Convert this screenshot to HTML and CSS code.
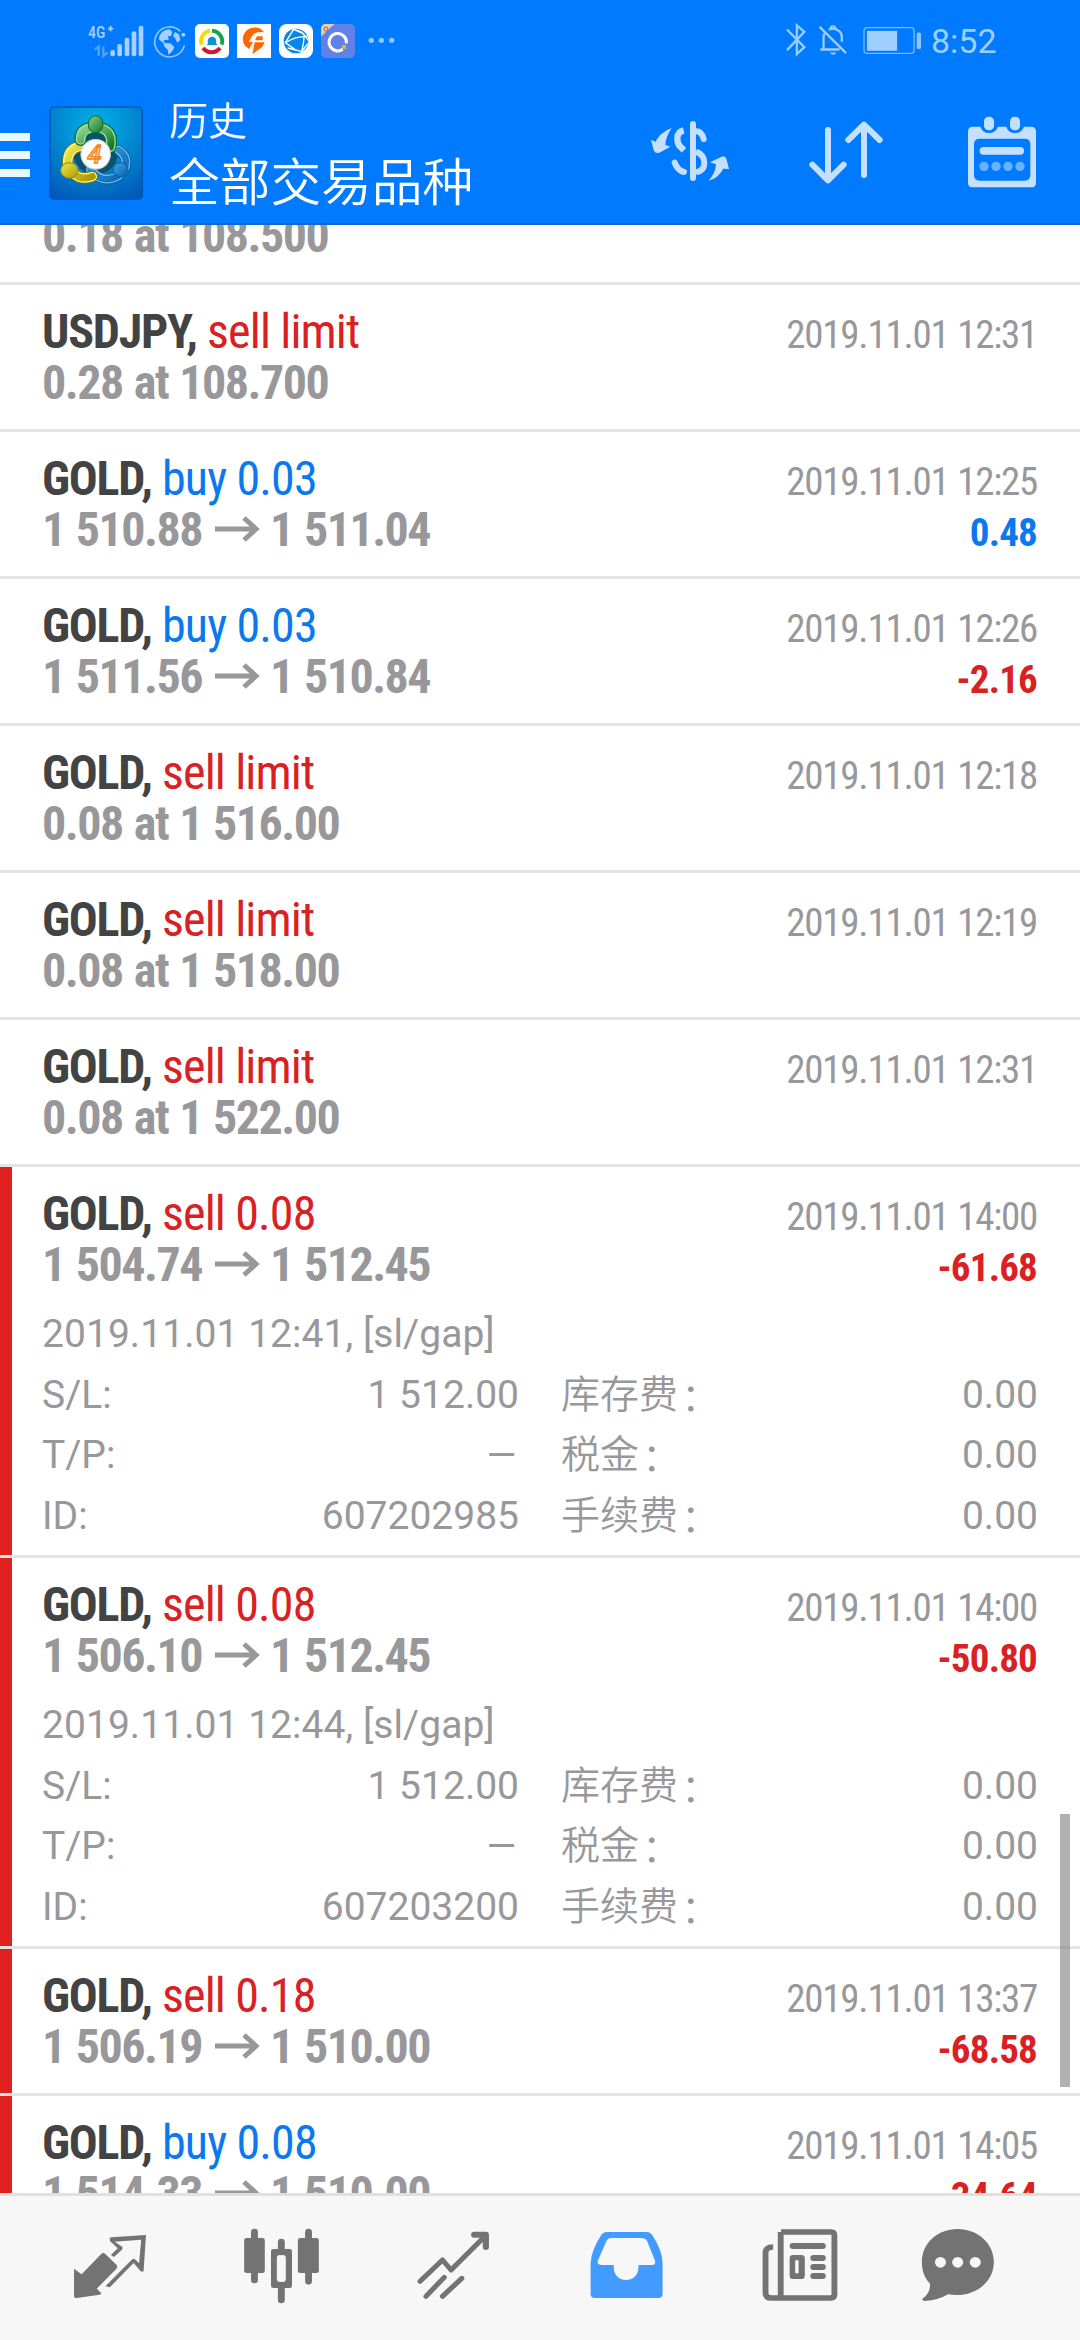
FILE: index.html
```html
<!DOCTYPE html>
<html lang="zh-CN">
<head>
<meta charset="utf-8">
<title>历史</title>
<link rel="stylesheet" href="styles.css">
</head>
<body>
<div class="screen">
  <div class="status">
    <div class="status-left">
      <svg class="signal" viewBox="84 66 168 108"><text x="84" y="111" font-size="47" textLength="52" lengthAdjust="spacingAndGlyphs">4G</text><path d="M144 83h16M152 75v16" stroke="#a6d0ff" stroke-width="5"/><g fill="#a6d0ff"><rect x="151" y="147" width="14" height="19" rx="6"/><rect x="172" y="129" width="14" height="37" rx="6"/><rect x="194" y="110" width="14" height="56" rx="6"/><rect x="215" y="91" width="14" height="75" rx="6"/><rect x="236" y="74" width="14" height="92" rx="6"/></g><path d="M104 146l12-9v28M130 137v28l13-11" fill="none" stroke="#4fa3ff" stroke-width="7"/></svg>
      <svg class="globe" viewBox="280 72 102 102"><path d="M362 94A45 45 0 1 0 374 136" fill="none" stroke="#8fc4ff" stroke-width="5"/><circle cx="371" cy="104" r="6" fill="#a6d0ff"/><path d="M299 108q10-19 31-20l8 8-4 12-9 1 2 10-15 2 3 8 17 1 12 11-4 10-13 14-3-16-9-8-4-13-13-9zM346 96l12 7 4 17-9 8-7-14-6-7z" fill="#a6d0ff"/></svg>
      <svg class="app" viewBox="0 0 102 102"><rect width="102" height="102" rx="15" fill="#fff"/><g fill="none" stroke-width="12"><path d="M20 62A32 32 0 0 1 45 20" stroke="#f4dc00"/><path d="M51 20A32 32 0 0 1 80 62" stroke="#16a34b"/><path d="M75 72A32 32 0 0 1 24 72" stroke="#d4142a"/></g><circle cx="51" cy="51" r="13" fill="#0d91cf"/><path d="M35 63h33l-9-10H44z" fill="#0d91cf"/></svg>
      <svg class="app" viewBox="0 0 102 102"><rect width="102" height="102" fill="#fff"/><path d="M24 65A34 34 0 0 1 81 25q-28-5-36 12L35 54h13L36 75zM58 41l-4 8h23V37H60M53 55h29Q80 69 66 76L46 91z" fill="#f60"/></svg>
      <svg class="app" viewBox="0 0 102 102"><rect width="102" height="102" rx="23" fill="#fff"/><circle cx="51" cy="51" r="37" fill="#0787e8"/><path d="M19 56L44 16Q67 21 73 29T68 83L50 78L19 56Q51 36 85 37M44 16l29 13 15 20M50 78L26 72M68 83l18-24" fill="none" stroke="#fff" stroke-width="4"/></svg>
      <svg class="app" viewBox="0 0 102 102"><rect width="102" height="102" rx="15" fill="#6081e5"/><path d="M0 38L40 0H14Q0 0 0 15z" fill="#efc8a7"/><circle cx="15" cy="15" r="6" fill="none" stroke="#956c65" stroke-width="3"/><path d="M65 76A26 26 0 1 1 76 58" fill="none" stroke="#fff" stroke-width="9"/><rect x="63" y="63" width="12" height="12" fill="#d0b65c"/></svg>
      <svg class="dots" viewBox="924 72 84 102"><g fill="#8fc6ff"><circle cx="934" cy="121" r="8"/><circle cx="964" cy="121" r="8"/><circle cx="995" cy="121" r="8"/></g></svg>
    </div>
    <div class="status-right">
      <svg class="bt" viewBox="78 68 64 104"><path d="M81 88l53 54-23 21V75l23 20-53 56" fill="none" stroke="#99ceff" stroke-width="7"/></svg>
      <svg class="bell" viewBox="174 68 90 104"><g fill="none" stroke="#99ceff" stroke-width="7"><path d="M178 80l81 80M180 149h59M190 148V113q0-9 5-15M206 89q15-8 29 2 11 7 11 21v13"/><path d="M211 88q0-10 8-10t8 8" stroke-width="6"/></g><path d="M209 158h21q-10 14-21 0z" fill="#99ceff"/></svg>
      <svg class="battery" viewBox="308 72 178 98"><rect x="311" y="82" width="151" height="78" rx="10" fill="none" stroke="#78bcff" stroke-width="4"/><rect x="320" y="92" width="91" height="60" fill="#9fcfff"/><rect x="470" y="97" width="13" height="50" rx="5" fill="#8ac5ff"/></svg>
      <span class="clock">8:52</span>
    </div>
  </div>
  <header class="bar">
    <div class="menu"><i></i><i></i><i></i></div>
    <svg class="logo" viewBox="148 78 280 280">
      <defs>
        <radialGradient id="sky" cx=".5" cy=".2" r=".9"><stop offset="0" stop-color="#00b4e8"/><stop offset="1" stop-color="#0058b8"/></radialGradient>
        <linearGradient id="gr" x1="0" y1="0" x2="1" y2="1"><stop offset="0" stop-color="#8ed38c"/><stop offset="1" stop-color="#147925"/></linearGradient>
        <linearGradient id="ye" x1="0" y1="0" x2="1" y2="1"><stop offset="0" stop-color="#f2e94f"/><stop offset="1" stop-color="#a99800"/></linearGradient>
        <linearGradient id="bl" x1="0" y1="0" x2="1" y2="1"><stop offset="0" stop-color="#3da8e8"/><stop offset="1" stop-color="#0761b2"/></linearGradient>
      </defs>
      <rect x="151" y="81" width="275" height="275" rx="12" fill="url(#sky)" stroke="#0754b5" stroke-width="4"/>
      <circle cx="287" cy="215" r="67" fill="#08526d"/>
      <g fill="none" stroke-linecap="round">
        <path d="M355 209Q389 232 371 270M355 286Q307 313 271 267" stroke="#075b9c" stroke-width="30"/>
        <path d="M355 209Q389 232 371 270M355 286Q307 313 271 267" stroke="#82cbee" stroke-width="25"/>
        <path d="M355 209Q389 232 371 270M355 286Q307 313 271 267" stroke="url(#bl)" stroke-width="19"/>
        <path d="M244 197Q200 205 204 253M222 279Q242 300 277 288" stroke="#74750f" stroke-width="34"/>
        <path d="M244 197Q200 205 204 253M222 279Q242 300 277 288" stroke="#fffb9f" stroke-width="28"/>
        <path d="M244 197Q200 205 204 253M222 279Q242 300 277 288" stroke="url(#ye)" stroke-width="21"/>
        <path d="M242 179Q242 149 270 144M306 145Q339 157 331 200" stroke="#086a38" stroke-width="36"/>
        <path d="M242 179Q242 149 270 144M306 145Q339 157 331 200" stroke="#9de0a3" stroke-width="29"/>
        <path d="M242 179Q242 149 270 144M306 145Q339 157 331 200" stroke="url(#gr)" stroke-width="21"/>
      </g>
      <ellipse cx="287" cy="132" rx="22" ry="25" fill="url(#gr)" stroke="#126d38" stroke-width="3"/>
      <ellipse cx="209" cy="270" rx="26" ry="23" fill="url(#ye)" stroke="#93911b" stroke-width="3"/>
      <ellipse cx="361" cy="267" rx="22" ry="21" fill="url(#bl)" stroke="#0960a4" stroke-width="3"/>
      <circle cx="287" cy="222" r="44" fill="#fff" stroke="#c9d1d7" stroke-width="3"/>
      <text x="263" y="248" font-size="78" class="logo-num" textLength="42" lengthAdjust="spacingAndGlyphs">4</text>
    </svg>
    <div class="titles"><div class="small">历史</div><div class="large">全部交易品种</div></div>
    <svg class="action" viewBox="60 60 300 270"><g fill="none" stroke="#c5e0ff" stroke-width="18"><path d="M219 102v162" stroke-linecap="round"/><path d="M191 121Q172 126 172 146Q172 163 182 171Q186 175 192 181" stroke-width="19"/><path d="M228 124Q245 124 251 147M164 218Q173 242 192 246" stroke-linecap="round"/><path d="M228 185Q253 194 253 219Q253 242 228 247"/></g><path d="M155 114Q138 119 123 133Q109 147 108 155L93 150L102 183Q107 191 118 188L151 170L136 165Q136 143 155 114zM265 272Q294 266 310 236L327 237L319 206Q314 195 305 200L270 217L288 223Q286 252 265 272z" fill="#c5e0ff"/></svg>
    <svg class="action" viewBox="540 60 300 270"><path d="M624 120v150M577 224l47 47 47-47M732 255V105M685 150l47-46 47 46" fill="none" stroke="#c5e0ff" stroke-width="18" stroke-linecap="round" stroke-linejoin="round"/></svg>
    <svg class="action" viewBox="1020 60 300 270"><path fill-rule="evenodd" d="M1044 125Q1044 110 1059 110H1081Q1088 129 1107 129Q1126 129 1134 110H1159Q1165 129 1185 129Q1205 129 1212 110H1233Q1248 110 1248 125V278Q1248 292 1233 292H1059Q1044 292 1044 278zM1079 146Q1062 146 1062 163V255Q1062 272 1079 272H1214Q1231 272 1231 255V163Q1231 146 1214 146z" fill="#c5e0ff"/><g fill="#c5e0ff"><rect x="1092" y="80" width="30" height="41" rx="14"/><rect x="1170" y="80" width="30" height="41" rx="14"/><rect x="1079" y="171" width="133" height="23" rx="11"/></g><g fill="#69b2ff"><circle cx="1092" cy="229" r="14"/><circle cx="1128" cy="229" r="14"/><circle cx="1164" cy="229" r="14"/><circle cx="1200" cy="229" r="14"/></g></svg>
  </header>

  <main class="list">
    <div class="partial"><div class="line"><span class="price">0.18 at 108.500</span></div></div>
    <article class="row"><div class="line"><span class="deal"><b>USDJPY,</b> <span class="sell">sell limit</span></span><time>2019.11.01 12:31</time></div><div class="line"><span class="price">0.28 at 108.700</span></div></article>
    <article class="row"><div class="line"><span class="deal"><b>GOLD,</b> <span class="buy">buy 0.03</span></span><time>2019.11.01 12:25</time></div><div class="line"><span class="price">1 510.88<svg class="arrow" viewBox="0 0 45 26"><path d="M0 13h42M29 2l12 11-12 11"/></svg>1 511.04</span><span class="amount buy">0.48</span></div></article>
    <article class="row"><div class="line"><span class="deal"><b>GOLD,</b> <span class="buy">buy 0.03</span></span><time>2019.11.01 12:26</time></div><div class="line"><span class="price">1 511.56<svg class="arrow" viewBox="0 0 45 26"><path d="M0 13h42M29 2l12 11-12 11"/></svg>1 510.84</span><span class="amount sell">-2.16</span></div></article>
    <article class="row"><div class="line"><span class="deal"><b>GOLD,</b> <span class="sell">sell limit</span></span><time>2019.11.01 12:18</time></div><div class="line"><span class="price">0.08 at 1 516.00</span></div></article>
    <article class="row"><div class="line"><span class="deal"><b>GOLD,</b> <span class="sell">sell limit</span></span><time>2019.11.01 12:19</time></div><div class="line"><span class="price">0.08 at 1 518.00</span></div></article>
    <article class="row"><div class="line"><span class="deal"><b>GOLD,</b> <span class="sell">sell limit</span></span><time>2019.11.01 12:31</time></div><div class="line"><span class="price">0.08 at 1 522.00</span></div></article>
    <article class="row marked open"><div class="line"><span class="deal"><b>GOLD,</b> <span class="sell">sell 0.08</span></span><time>2019.11.01 14:00</time></div><div class="line"><span class="price">1 504.74<svg class="arrow" viewBox="0 0 45 26"><path d="M0 13h42M29 2l12 11-12 11"/></svg>1 512.45</span><span class="amount sell">-61.68</span></div>
      <div class="detail"><div class="comment">2019.11.01 12:41, [sl/gap]</div>
        <div class="pair"><span>S/L:</span><span>1 512.00</span></div><div class="pair"><span>库存费<i class="colon">：</i></span><span>0.00</span></div>
        <div class="pair"><span>T/P:</span><span class="dash">–</span></div><div class="pair"><span>税金<i class="colon">：</i></span><span>0.00</span></div>
        <div class="pair"><span>ID:</span><span>607202985</span></div><div class="pair"><span>手续费<i class="colon">：</i></span><span>0.00</span></div></div></article>
    <article class="row marked open"><div class="line"><span class="deal"><b>GOLD,</b> <span class="sell">sell 0.08</span></span><time>2019.11.01 14:00</time></div><div class="line"><span class="price">1 506.10<svg class="arrow" viewBox="0 0 45 26"><path d="M0 13h42M29 2l12 11-12 11"/></svg>1 512.45</span><span class="amount sell">-50.80</span></div>
      <div class="detail"><div class="comment">2019.11.01 12:44, [sl/gap]</div>
        <div class="pair"><span>S/L:</span><span>1 512.00</span></div><div class="pair"><span>库存费<i class="colon">：</i></span><span>0.00</span></div>
        <div class="pair"><span>T/P:</span><span class="dash">–</span></div><div class="pair"><span>税金<i class="colon">：</i></span><span>0.00</span></div>
        <div class="pair"><span>ID:</span><span>607203200</span></div><div class="pair"><span>手续费<i class="colon">：</i></span><span>0.00</span></div></div></article>
    <article class="row marked"><div class="line"><span class="deal"><b>GOLD,</b> <span class="sell">sell 0.18</span></span><time>2019.11.01 13:37</time></div><div class="line"><span class="price">1 506.19<svg class="arrow" viewBox="0 0 45 26"><path d="M0 13h42M29 2l12 11-12 11"/></svg>1 510.00</span><span class="amount sell">-68.58</span></div></article>
    <article class="row marked"><div class="line"><span class="deal"><b>GOLD,</b> <span class="buy">buy 0.08</span></span><time>2019.11.01 14:05</time></div><div class="line"><span class="price">1 514.33<svg class="arrow" viewBox="0 0 45 26"><path d="M0 13h42M29 2l12 11-12 11"/></svg>1 510.00</span><span class="amount sell">-34.64</span></div></article>
    <div class="scrollbar"></div>
  </main>

  <nav class="tabs">
    <svg viewBox="69.7 348 499.5 432" preserveAspectRatio="none"><path d="M215 566L237 583L294 522Q300 516 306 522L338 554Q343 560 338 566L281 626L294 639Q294 643 289 644L223 654Q215 654 215 647z"/><path fill-rule="evenodd" d="M424 465L417 574Q413 577 408 573L388 549L319 622L306 619L384 538Q388 534 392 538L404 550L410 479L333 485L355 500Q358 505 354 509L331 531L322 525L342 505L320 484Q316 474 323 472z"/></svg>
    <svg viewBox="569.2 348 499.5 432" preserveAspectRatio="none"><rect x="709" y="474" width="60" height="105" rx="7"/><rect x="865" y="474" width="61" height="105" rx="7"/><path d="M739 456v144M896 456v148M817 486v30M817 620v40" class="s20"/><path fill-rule="evenodd" d="M794 507h47q7 0 7 7v103q0 7-7 7h-47q-7 0-7-7V514q0-7 7-7zM813 525q-9 0-9 9v63q0 9 9 9h8q9 0 9-9v-63q0-9-9-9z"/></svg>
    <svg viewBox="1068.7 348 499.5 432" preserveAspectRatio="none"><path d="M1220 604L1285 540L1310 570L1409 468M1237 649L1290 592M1285 649L1341 595" class="s15"/><path d="M1377 464H1411V501" class="s18"/></svg>
    <svg class="current" viewBox="0 348 499.5 432" preserveAspectRatio="none"><path fill-rule="evenodd" d="M195 456H311Q320 456 326 465Q355 510 356 550V643Q356 654 344 654H159Q147 654 147 643V550Q149 510 178 465Q184 456 195 456zM208 474Q197 474 193 483L168 542Q165 554 177 555H214V562C214 613 286 613 286 562V555H326Q337 554 334 542L311 483Q307 474 294 474z"/></svg>
    <svg viewBox="499.5 348 499.5 432" preserveAspectRatio="none"><path d="M700 456H846Q855 456 855 466V643Q855 654 845 654H672Q655 654 655 638V518Q655 501 677 501M699 456V654" class="s17"/><rect x="725" y="489" width="105" height="18" rx="9"/><path fill-rule="evenodd" d="M735 525H759Q769 525 769 535V587Q769 597 759 597H735Q725 597 725 587V535Q725 525 735 525zM741 541V580H751V541z"/><rect x="785" y="525" width="45" height="18" rx="9"/><rect x="785" y="552" width="45" height="18" rx="9"/><rect x="785" y="579" width="45" height="18" rx="9"/></svg>
    <svg viewBox="999 348 499.5 432" preserveAspectRatio="none"><path d="M1213 447C1270 447 1318 489 1318 546C1318 607 1262 656 1185 643Q1156 661 1118 663Q1106 661 1112 655C1124 647 1135 630 1132 610C1116 593 1109 571 1109 546C1109 489 1155 447 1213 447z"/><g fill="#f7f7f7"><circle cx="1163" cy="547" r="16"/><circle cx="1213" cy="547" r="16"/><circle cx="1264" cy="547" r="16"/></g></svg>
  </nav>
</div>
</body>
</html>
```
FILE: styles.css
```css
* { box-sizing: border-box; }
body { margin: 0; background: #fff; font-family: Roboto, "Noto Sans CJK SC", sans-serif; }
svg { display: block; flex: none; }
.screen { width: 1080px; height: 2340px; display: flex; flex-direction: column; overflow: hidden; }
.status { height: 81px; background: #007aff; display: flex; justify-content: space-between; padding: 0 84px 0 88px; color: #9fcfff; }
.status-left { display: flex; height: 34px; margin-top: 24px; align-items: center; gap: 8px; }
.status-right { display: flex; height: 34px; margin-top: 23px; align-items: center; }
.signal { width: 56px; height: 36px; fill: #a6d0ff; margin-right: 1px; font-family: "Roboto Condensed", Roboto, sans-serif; font-weight: 500; }
.globe { width: 34px; height: 34px; }
.app { width: 34px; height: 34px; }
.dots { width: 28px; height: 34px; margin-left: 5px; }
.bt { width: 21px; height: 34px; margin-right: 11px; }
.bell { width: 30px; height: 34px; margin-right: 15px; }
.battery { width: 59px; height: 33px; margin-right: 9px; }
.clock { font-size: 34px; line-height: 34px; width: 65px; padding-top: 1px; }
.bar { height: 144px; background: #007aff; border-bottom: 2px solid #1268ca; display: flex; color: #fff; }
.menu { width: 30px; margin: 52px 19px 0 0; display: flex; flex-direction: column; gap: 10px; }
.menu i { height: 8px; background: #eaf8ff; }
.logo { width: 94px; height: 94px; margin-top: 25px; }
.logo-num { fill: #ffd9a0; stroke: #f58320; stroke-width: 4; font-family: Roboto, sans-serif; font-style: italic; font-weight: 500; }
.titles { margin-left: 26px; width: 445px; padding-top: 11px; font-family: "Noto Sans CJK SC", sans-serif; font-weight: 350; white-space: nowrap; }
.small { font-size: 39px; line-height: 53px; }
.large { font-size: 50.7px; line-height: 69px; }
.action { width: 100px; height: 90px; margin: 29px 60px 0 26px; }
.action + .action { margin-left: 0; }
.action:last-child { margin-right: 0; }

.list { position: relative; height: 1968px; overflow: hidden; }
.partial { margin-top: -15px; height: 72px; padding: 0 42px; }
.row { height: 147px; padding: 21px 42px 0; border-top: 3px solid #e4e4e4; }
.open { height: 391px; }
.marked { background: linear-gradient(#e01f1f, #e01f1f) 0 0 / 12px 100% no-repeat; background-clip: padding-box; }
.line { height: 51px; display: flex; justify-content: space-between; align-items: baseline; font-family: "Roboto Condensed", Roboto, sans-serif; font-stretch: 75%; font-size: 48px; line-height: 51px; color: #98989b; white-space: nowrap; }
b { color: #434343; font-weight: 700; }
.deal { letter-spacing: -.85px; }
.deal b { letter-spacing: -1.25px; }
.price { font-weight: 700; letter-spacing: -1.5px; word-spacing: 1.5px; }
time, .amount { font-size: 39px; line-height: 40px; margin-right: 1px; }
time { letter-spacing: -1.25px; word-spacing: 1px; }
.amount { font-weight: 700; letter-spacing: -.8px; }
.line .sell { color: #d92022; }
.line .buy { color: #0a78ee; }
.arrow { display: inline-block; width: 45px; height: 26px; margin: 0 10px 0 13px; vertical-align: 4px; fill: none; stroke: #98989b; stroke-width: 5; }
.detail { display: grid; grid-template-columns: 477px 477px; column-gap: 42px; padding-top: 14px; font-size: 39px; line-height: 60.7px; color: #98989b; font-weight: 400; }
.comment { grid-column: 1 / -1; height: 60.7px; letter-spacing: .05px; }
.pair { display: flex; justify-content: space-between; height: 60.7px; }
.pair:nth-child(odd) span:first-child { font-weight: 350; }
.colon { display: inline-block; font-style: normal; transform: translate(3px, 3px); }
.dash { transform: scaleX(1.3); transform-origin: right; }
.scrollbar { position: absolute; right: 10px; top: 1589px; width: 10px; height: 273px; background: rgba(120,120,120,.58); }

.tabs { height: 147px; border-top: 3px solid #e0e0e0; background: #f7f7f7; display: flex; padding-left: 24px; fill: #737373; }
.tabs svg { width: 172px; height: 144px; }
.tabs .current { fill: #429cff; }
.s20, .s15, .s17, .s18 { fill: none; stroke: #737373; stroke-linecap: round; stroke-linejoin: round; }
.s20 { stroke-width: 20; }
.s15 { stroke-width: 15; }
.s17 { stroke-width: 17; stroke-linecap: butt; }
.s18 { stroke-width: 18; }
```
